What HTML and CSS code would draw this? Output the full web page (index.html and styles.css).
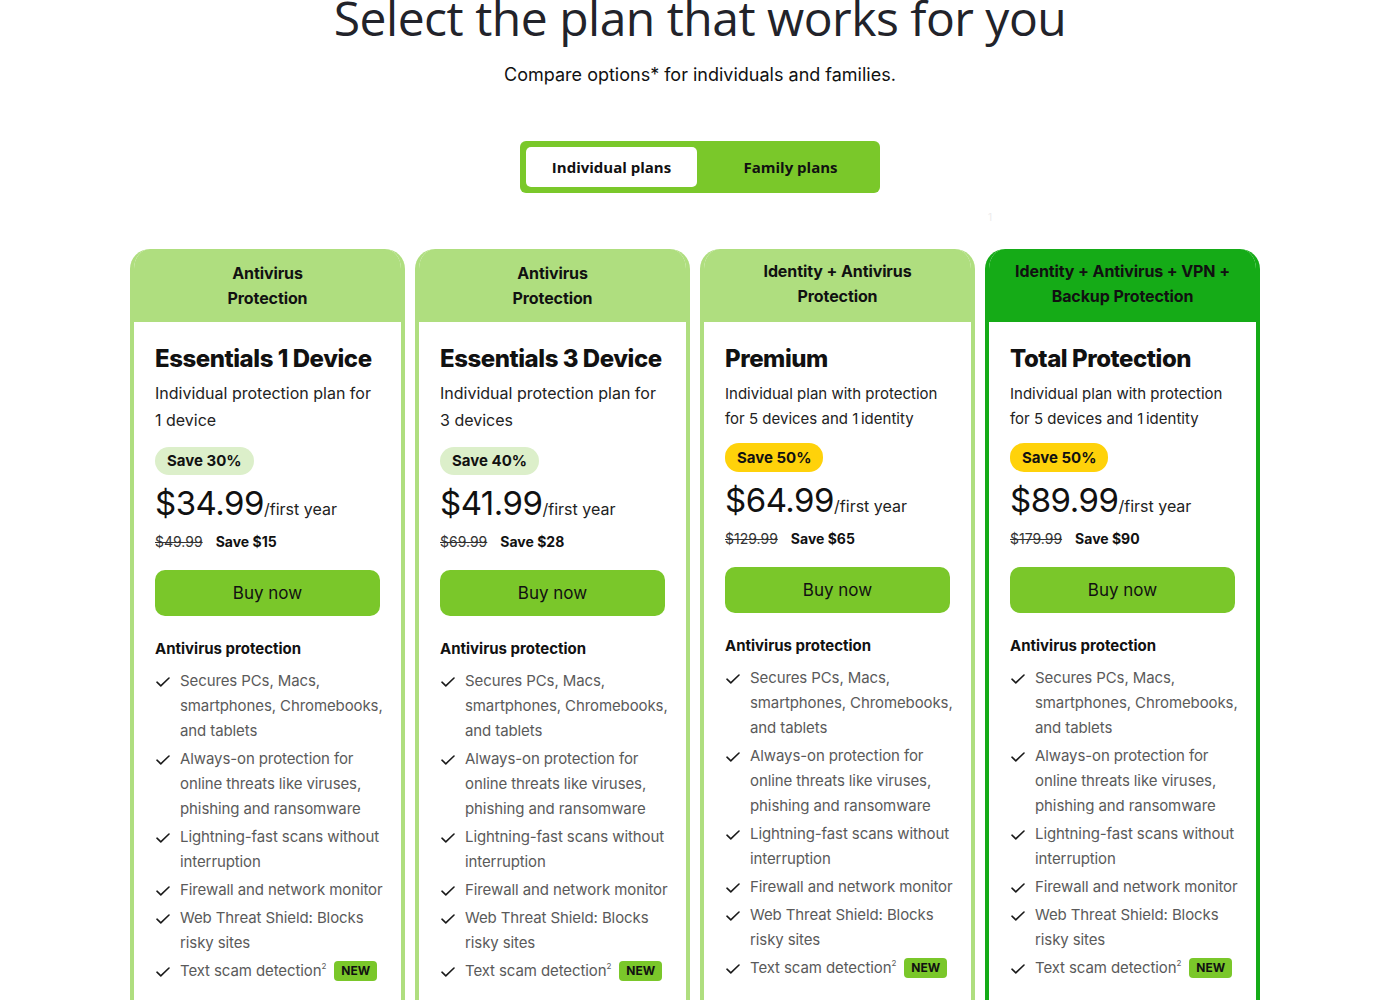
FILE: index.html
```html
<!DOCTYPE html>
<html lang="en">
<head>
<meta charset="utf-8">
<title>Select the plan that works for you</title>
<link rel="stylesheet" href="styles.css">
</head>
<body>
<main class="page">
  <h1 class="title">Select the plan that works for you</h1>
  <p class="subtitle">Compare options* for individuals and families.</p>
  <div class="toggle">
    <button class="tab tab-active">Individual plans</button>
    <button class="tab tab-other">Family plans</button>
  </div>
  <div class="note-row"><span class="note">1</span></div>

  <div class="cards">
    <article class="card">
      <header class="card-head">Antivirus<br>Protection</header>
      <div class="card-body">
        <h2 class="plan">Essentials 1 Device</h2>
        <p class="desc">Individual protection plan for 1 device</p>
        <span class="badge badge-light">Save 30%</span>
        <div class="price"><span class="amount">$34.99</span><span class="per">/first year</span></div>
        <div class="was"><s>$49.99</s><b>Save $15</b></div>
        <a class="buy" href="#">Buy now</a>
        <h3 class="feat-title">Antivirus protection</h3>
        <ul class="features">
          <li><svg class="check" viewBox="0 0 14 10"><path d="M1 5.2 L4.8 8.8 L13 1"/></svg><span>Secures PCs, Macs, smartphones, Chromebooks, and tablets</span></li>
          <li><svg class="check" viewBox="0 0 14 10"><path d="M1 5.2 L4.8 8.8 L13 1"/></svg><span>Always-on protection for online threats like viruses, phishing and ransomware</span></li>
          <li><svg class="check" viewBox="0 0 14 10"><path d="M1 5.2 L4.8 8.8 L13 1"/></svg><span>Lightning-fast scans without interruption</span></li>
          <li><svg class="check" viewBox="0 0 14 10"><path d="M1 5.2 L4.8 8.8 L13 1"/></svg><span>Firewall and network monitor</span></li>
          <li><svg class="check" viewBox="0 0 14 10"><path d="M1 5.2 L4.8 8.8 L13 1"/></svg><span>Web Threat Shield: Blocks risky sites</span></li>
          <li><svg class="check" viewBox="0 0 14 10"><path d="M1 5.2 L4.8 8.8 L13 1"/></svg><span>Text scam detection<sup>2</sup><em class="new">NEW</em></span></li>
        </ul>
      </div>
    </article>

    <article class="card">
      <header class="card-head">Antivirus<br>Protection</header>
      <div class="card-body">
        <h2 class="plan">Essentials 3 Device</h2>
        <p class="desc">Individual protection plan for 3 devices</p>
        <span class="badge badge-light">Save 40%</span>
        <div class="price"><span class="amount">$41.99</span><span class="per">/first year</span></div>
        <div class="was"><s>$69.99</s><b>Save $28</b></div>
        <a class="buy" href="#">Buy now</a>
        <h3 class="feat-title">Antivirus protection</h3>
        <ul class="features">
          <li><svg class="check" viewBox="0 0 14 10"><path d="M1 5.2 L4.8 8.8 L13 1"/></svg><span>Secures PCs, Macs, smartphones, Chromebooks, and tablets</span></li>
          <li><svg class="check" viewBox="0 0 14 10"><path d="M1 5.2 L4.8 8.8 L13 1"/></svg><span>Always-on protection for online threats like viruses, phishing and ransomware</span></li>
          <li><svg class="check" viewBox="0 0 14 10"><path d="M1 5.2 L4.8 8.8 L13 1"/></svg><span>Lightning-fast scans without interruption</span></li>
          <li><svg class="check" viewBox="0 0 14 10"><path d="M1 5.2 L4.8 8.8 L13 1"/></svg><span>Firewall and network monitor</span></li>
          <li><svg class="check" viewBox="0 0 14 10"><path d="M1 5.2 L4.8 8.8 L13 1"/></svg><span>Web Threat Shield: Blocks risky sites</span></li>
          <li><svg class="check" viewBox="0 0 14 10"><path d="M1 5.2 L4.8 8.8 L13 1"/></svg><span>Text scam detection<sup>2</sup><em class="new">NEW</em></span></li>
        </ul>
      </div>
    </article>

    <article class="card card-compact">
      <header class="card-head">Identity + Antivirus<br>Protection</header>
      <div class="card-body">
        <h2 class="plan">Premium</h2>
        <p class="desc">Individual plan with protection for 5 devices and 1&#8239;identity</p>
        <span class="badge badge-yellow">Save 50%</span>
        <div class="price"><span class="amount">$64.99</span><span class="per">/first year</span></div>
        <div class="was"><s>$129.99</s><b>Save $65</b></div>
        <a class="buy" href="#">Buy now</a>
        <h3 class="feat-title">Antivirus protection</h3>
        <ul class="features">
          <li><svg class="check" viewBox="0 0 14 10"><path d="M1 5.2 L4.8 8.8 L13 1"/></svg><span>Secures PCs, Macs, smartphones, Chromebooks, and tablets</span></li>
          <li><svg class="check" viewBox="0 0 14 10"><path d="M1 5.2 L4.8 8.8 L13 1"/></svg><span>Always-on protection for online threats like viruses, phishing and ransomware</span></li>
          <li><svg class="check" viewBox="0 0 14 10"><path d="M1 5.2 L4.8 8.8 L13 1"/></svg><span>Lightning-fast scans without interruption</span></li>
          <li><svg class="check" viewBox="0 0 14 10"><path d="M1 5.2 L4.8 8.8 L13 1"/></svg><span>Firewall and network monitor</span></li>
          <li><svg class="check" viewBox="0 0 14 10"><path d="M1 5.2 L4.8 8.8 L13 1"/></svg><span>Web Threat Shield: Blocks risky sites</span></li>
          <li><svg class="check" viewBox="0 0 14 10"><path d="M1 5.2 L4.8 8.8 L13 1"/></svg><span>Text scam detection<sup>2</sup><em class="new">NEW</em></span></li>
        </ul>
      </div>
    </article>

    <article class="card card-compact card-featured">
      <header class="card-head">Identity + Antivirus + VPN +<br>Backup Protection</header>
      <div class="card-body">
        <h2 class="plan">Total Protection</h2>
        <p class="desc">Individual plan with protection for 5 devices and 1&#8239;identity</p>
        <span class="badge badge-yellow">Save 50%</span>
        <div class="price"><span class="amount">$89.99</span><span class="per">/first year</span></div>
        <div class="was"><s>$179.99</s><b>Save $90</b></div>
        <a class="buy" href="#">Buy now</a>
        <h3 class="feat-title">Antivirus protection</h3>
        <ul class="features">
          <li><svg class="check" viewBox="0 0 14 10"><path d="M1 5.2 L4.8 8.8 L13 1"/></svg><span>Secures PCs, Macs, smartphones, Chromebooks, and tablets</span></li>
          <li><svg class="check" viewBox="0 0 14 10"><path d="M1 5.2 L4.8 8.8 L13 1"/></svg><span>Always-on protection for online threats like viruses, phishing and ransomware</span></li>
          <li><svg class="check" viewBox="0 0 14 10"><path d="M1 5.2 L4.8 8.8 L13 1"/></svg><span>Lightning-fast scans without interruption</span></li>
          <li><svg class="check" viewBox="0 0 14 10"><path d="M1 5.2 L4.8 8.8 L13 1"/></svg><span>Firewall and network monitor</span></li>
          <li><svg class="check" viewBox="0 0 14 10"><path d="M1 5.2 L4.8 8.8 L13 1"/></svg><span>Web Threat Shield: Blocks risky sites</span></li>
          <li><svg class="check" viewBox="0 0 14 10"><path d="M1 5.2 L4.8 8.8 L13 1"/></svg><span>Text scam detection<sup>2</sup><em class="new">NEW</em></span></li>
        </ul>
      </div>
    </article>
  </div>
</main>
</body>
</html>
```

FILE: styles.css
```css
* { box-sizing: border-box; }

html, body {
  margin: 0;
  padding: 0;
  background: #fff;
  overflow: hidden;
}

body {
  font-family: Inter, "Liberation Sans", sans-serif;
  color: #111;
}

.page {
  display: flex;
  flex-direction: column;
  align-items: center;
}

.title {
  margin: -12px 0 0;
  font-family: "Open Sans", "Liberation Sans", sans-serif;
  font-weight: 400;
  font-size: 48px;
  line-height: 60px;
  color: #22232a;
  letter-spacing: -0.5px;
  white-space: nowrap;
}

.subtitle {
  margin: 14px 0 0;
  font-family: Inter, sans-serif;
  font-size: 18px;
  line-height: 26px;
  color: #111;
}

.toggle {
  margin-top: 53px;
  width: 360px;
  height: 52px;
  padding: 6px;
  background: #7ac82a;
  border-radius: 6px;
  display: flex;
}

.tab {
  flex: 1;
  border: 0;
  background: transparent;
  font-family: "Open Sans", sans-serif;
  font-weight: 700;
  font-size: 15px;
  color: #111;
  border-radius: 5px;
  padding: 0;
  cursor: pointer;
}

.tab-active {
  flex: 0 0 171px;
  background: #fff;
}

.tab-other {
  padding-left: 10px;
}

.note-row {
  width: 360px;
  height: 56px;
  display: flex;
  justify-content: flex-end;
  padding: 18px 0 0 0;
}

.note {
  font-size: 10px;
  line-height: 12px;
  color: #ececec;
  margin-right: -112px;
}

.cards {
  align-self: flex-start;
  margin-left: 130px;
  width: 1130px;
  display: grid;
  grid-template-columns: repeat(4, 275px);
  column-gap: 10px;
  align-items: start;
}

.card {
  --accent: #afde7f;
  border: 4px solid var(--accent);
  border-top: 0;
  border-radius: 20px 20px 0 0;
  overflow: hidden;
  background: #fff;
}

.card-featured {
  --accent: #15ab17;
}

.card-head {
  background: var(--accent);
  height: 73px;
  margin: 0 -4px;
  display: flex;
  align-items: center;
  justify-content: center;
  text-align: center;
  font-weight: 700;
  font-size: 16px;
  line-height: 25px;
  color: #111;
  letter-spacing: -0.1px;
}

.card-compact .card-head {
  padding-bottom: 4px;
}

.card-body {
  padding: 22px 21px 40px;
}

.plan {
  margin: 0;
  font-size: 24px;
  font-weight: 800;
  line-height: 30px;
  letter-spacing: -0.45px;
  color: #111;
  white-space: nowrap;
}

.desc {
  margin: 6px 0 0;
  font-size: 16px;
  line-height: 27px;
  color: #222;
}

.card-compact .desc {
  font-size: 15px;
  line-height: 25px;
  margin-top: 7px;
}

.badge {
  display: inline-block;
  margin-top: 13px;
  height: 28px;
  padding: 0 12px;
  border-radius: 14px;
  font-size: 15px;
  font-weight: 700;
  line-height: 28px;
  color: #111;
}

.card-compact .badge {
  margin-top: 12px;
  height: 29px;
  line-height: 29px;
}

.badge-light { background: #dcefca; }
.badge-yellow { background: #ffd20a; }

.price {
  margin-top: 8px;
  display: flex;
  align-items: baseline;
  line-height: 40px;
}

.amount {
  font-size: 33px;
  font-weight: 400;
  letter-spacing: -0.5px;
}

.per {
  font-size: 16px;
  color: #222;
}

.was {
  margin-top: 3px;
  display: flex;
  gap: 13px;
  font-size: 14px;
  line-height: 20px;
}

.was s {
  color: #333;
}

.was b {
  font-weight: 700;
  color: #111;
}

.buy {
  display: flex;
  align-items: center;
  justify-content: center;
  margin-top: 18px;
  height: 46px;
  border-radius: 10px;
  background: #7ac72a;
  color: #111;
  text-decoration: none;
  font-size: 17px;
  font-weight: 400;
}

.feat-title {
  margin: 22px 0 0;
  font-size: 15px;
  font-weight: 700;
  line-height: 22px;
  color: #111;
}

.features {
  list-style: none;
  margin: 8px -12px 0 0;
  padding: 0;
  display: flex;
  flex-direction: column;
  gap: 3px;
}

.features li {
  display: flex;
  align-items: flex-start;
  gap: 10px;
  font-size: 15px;
  line-height: 25px;
  letter-spacing: -0.1px;
  color: #5a5a5a;
}

.check {
  flex: 0 0 14px;
  width: 14px;
  height: 10px;
  margin: 9px 0 0 1px;
  fill: none;
  stroke: #1a1a1a;
  stroke-width: 1.6;
  stroke-linecap: round;
  stroke-linejoin: round;
}

.features sup {
  font-size: 8px;
  line-height: 0;
  vertical-align: 7px;
}

.new {
  display: inline-block;
  margin-left: 8px;
  padding: 0 7px;
  height: 20px;
  line-height: 20px;
  border-radius: 4px;
  background: #7ac72a;
  color: #111;
  font-style: normal;
  font-weight: 700;
  font-size: 12px;
  letter-spacing: 0;
  vertical-align: 1px;
}
```
